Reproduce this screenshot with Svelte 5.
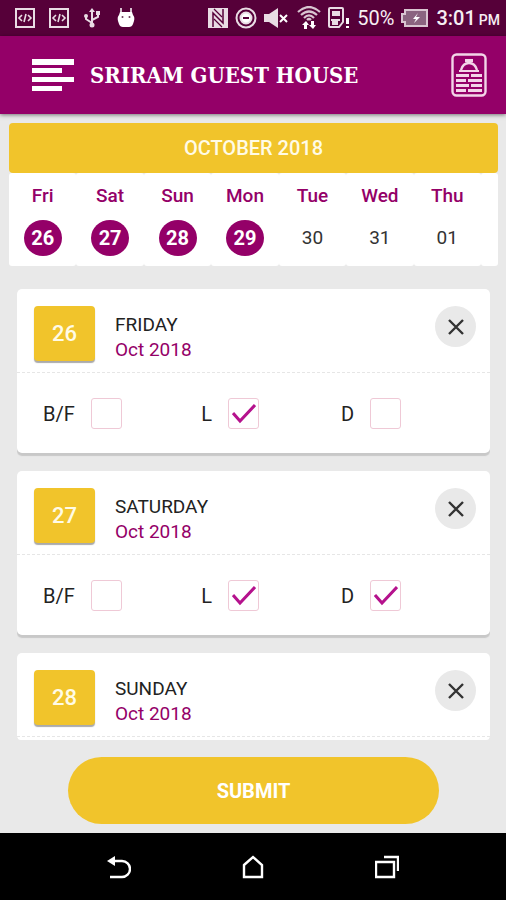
<script lang="ts">
	type Meal = { label: string; name: string; checked: boolean };
	type Booking = { date: string; day: string; month: string; meals: Meal[] };

	const meals = (b: boolean, l: boolean, d: boolean): Meal[] => [
		{ label: 'B/F', name: 'breakfast', checked: b },
		{ label: 'L', name: 'lunch', checked: l },
		{ label: 'D', name: 'dinner', checked: d }
	];

	let week = $state([
		{ day: 'Fri', date: '26', selected: true },
		{ day: 'Sat', date: '27', selected: true },
		{ day: 'Sun', date: '28', selected: true },
		{ day: 'Mon', date: '29', selected: true },
		{ day: 'Tue', date: '30', selected: false },
		{ day: 'Wed', date: '31', selected: false },
		{ day: 'Thu', date: '01', selected: false }
	]);

	let bookings = $state<Booking[]>([
		{ date: '26', day: 'FRIDAY', month: 'Oct 2018', meals: meals(false, true, false) },
		{ date: '27', day: 'SATURDAY', month: 'Oct 2018', meals: meals(false, true, true) },
		{ date: '28', day: 'SUNDAY', month: 'Oct 2018', meals: meals(false, true, true) }
	]);

	function remove(date: string) {
		bookings = bookings.filter((b) => b.date !== date);
		const day = week.find((d) => d.date === date);
		if (day) day.selected = false;
	}
</script>

{#snippet codeIcon()}
	<svg width="20" height="20" viewBox="0 0 20 20" fill="none" stroke="#e9dce4">
		<rect x="1" y="1" width="18" height="18" stroke-width="2" />
		<path d="M7 7 4 10l3 3M13 7l3 3-3 3M11 6l-2 8" stroke-width="1.6" />
	</svg>
{/snippet}

<div class="screen">
	<div class="status">
		<div class="status-group left">
			{@render codeIcon()}
			{@render codeIcon()}
			<svg width="20" height="20" viewBox="0 0 20 20" fill="none" stroke="#e9dce4" stroke-width="2">
				<path d="M9 3v14M9 15 3 11V7M9 12l6-3V5" />
				<path d="M9 0 6 4h6zM13 3h4v4h-4z" fill="#e9dce4" stroke="none" />
				<circle cx="9" cy="17" r="2.500" fill="#e9dce4" stroke="none" />
				<circle cx="3" cy="8" r="2" fill="#e9dce4" stroke="none" />
			</svg>
			<svg width="20" height="20" viewBox="0 0 20 20">
				<path d="M4 0v5M14 0v5" stroke="#fff" stroke-width="1.500" />
				<path d="M3 4h12l1 3q2 2 1 6l-1 3q-1 3-4 3H6q-3 0-4-3l-1-3q-1-4 1-6z" fill="#fff" />
				<circle cx="5.500" cy="9" r="1" fill="#6b3a57" />
				<circle cx="12.500" cy="9" r="1" fill="#6b3a57" />
			</svg>
		</div>
		<div class="status-group right">
			<svg width="20" height="20" viewBox="0 0 20 20">
				<path d="M0 0h20v20H0z" fill="#e9dce4" />
				<path d="M5 19V5l10 10V1" fill="none" stroke="#560039" stroke-width="1.500" />
				<path d="M6 1 14 9M6 11l8 8" fill="none" stroke="#560039" stroke-width="1.200" />
			</svg>
			<svg width="22" height="22" viewBox="0 0 22 22" fill="none" stroke="#e9dce4" stroke-width="2">
				<circle cx="11" cy="11" r="9.500" />
				<circle cx="11" cy="11" r="5.500" fill="#fff" />
				<path d="M8 11h6" stroke="#560039" />
			</svg>
			<svg width="26" height="20" viewBox="0 0 26 20">
				<path d="M0 6h5l9-6v20l-9-6H0z" fill="#e9dce4" />
				<path d="m16 7 7 7M23 7l-7 7" stroke="#fff" stroke-width="2" />
			</svg>
			<svg width="24" height="24" viewBox="0 0 24 24" fill="none" stroke="#d9c5d1" stroke-width="2.200">
				<path d="M1 6Q12-4 23 6M4 9q8-7 16 0M7 12q5-5 10 0M10 14q2-2 4 0" />
				<path d="m5 19 4-4 3 4h-2v4H7v-4zM12 19h2v-4h3v4h2l-3 4z" fill="#fff" stroke="none" />
			</svg>
			<svg width="22" height="22" viewBox="0 0 22 22">
				<path d="M1 2q0-1 1-1h12q1 0 1 1v13l-4 5H2q-1 0-1-1z" fill="none" stroke="#e9dce4" stroke-width="2" />
				<path d="M4 4h8v5H4zM3 12h9v2H3zM4 13h6v5H4z" fill="#e9dce4" />
				<path d="M18 11h3v6h-3zM18 19h3v2h-3z" fill="#fff" />
			</svg>
			<span class="percent">50%</span>
			<svg width="28" height="18" viewBox="0 0 28 18">
				<path d="M4 1h22v16H4v-4H1V5h3z" fill="#8b6480" stroke="#d9c5d1" stroke-width="2" />
				<path d="m17 4-5 6h3l-2 4 6-6h-4z" fill="#fff" />
			</svg>
			<span class="time">3:01 <small>PM</small></span>
		</div>
	</div>

	<header>
		<button class="icon-btn" aria-label="Menu">
			<svg width="42" height="32" viewBox="0 0 42 32" fill="#fff">
				<path d="M0 0h42v6H0zM0 9h30v5H0zM0 18h42v5H0zM0 27h30v5H0z" />
			</svg>
		</button>
		<h1>SRIRAM GUEST HOUSE</h1>
		<button class="icon-btn" aria-label="Food menu">
			<svg width="36" height="44" viewBox="0 0 36 44" fill="none" stroke="#f3d5e8" stroke-width="2">
				<rect x="1.500" y="1.500" width="33" height="41" rx="4" stroke-width="2.400" />
				<path d="M8 18h20" />
				<path d="M10 17q2-7 8-7t8 7" stroke-width="2.400" />
				<path d="M14 6h8v3h-2v2h-4V9h-2z" fill="#f3d5e8" stroke="none" />
				<path d="M5 22.500h13M20 22.500h11M5 27.500h10M17 27.500h14M5 32.500h13M20 32.500h11M5 37.500h10M17 37.500h14" stroke-width="2.800" />
			</svg>
		</button>
	</header>

	<section class="calendar">
		<h2>OCTOBER 2018</h2>
		<div class="week">
			{#each week as d}
				<button
					class="day"
					class:selected={d.selected}
					aria-pressed={d.selected}
					onclick={() => (d.selected = !d.selected)}
				>
					<span class="name">{d.day}</span>
					<span class="num">{d.date}</span>
				</button>
			{/each}
			<div class="filler"></div>
		</div>
	</section>

	<main>
		{#each bookings as b (b.date)}
			<article>
				<div class="card-top">
					<div class="badge">{b.date}</div>
					<div class="when">
						<h3>{b.day}</h3>
						<p>{b.month}</p>
					</div>
					<button class="close" aria-label="Remove {b.day}" onclick={() => remove(b.date)}>
						<svg width="16" height="16" viewBox="0 0 16 16" stroke="#333" stroke-width="2.400">
							<path d="m1 1 14 14M15 1 1 15" />
						</svg>
					</button>
				</div>
				<div class="meals">
					{#each b.meals as meal}
						<label>
							{meal.label}
							<span class="box">
								<input type="checkbox" name="{meal.name}-{b.date}" bind:checked={meal.checked} />
								{#if meal.checked}
									<svg width="24" height="20" viewBox="0 0 24 20" fill="none" stroke="#b5128d" stroke-width="3">
										<path d="m1 9 7 8L23 1" />
									</svg>
								{/if}
							</span>
						</label>
					{/each}
				</div>
			</article>
		{/each}
	</main>

	<button class="submit">SUBMIT</button>

	<nav>
		<button aria-label="Back">
			<svg width="24" height="24" viewBox="0 0 24 24" fill="none" stroke="#fff" stroke-width="2.400">
				<path d="M5 6h10a8 8 0 0 1 0 16H3" />
				<path d="M0 6 8 1v10z" fill="#fff" stroke="none" />
			</svg>
		</button>
		<button aria-label="Home">
			<svg width="24" height="24" viewBox="0 0 24 24" fill="none" stroke="#fff" stroke-width="2.400">
				<path d="M3 10 12 2l9 8v12H3z" />
			</svg>
		</button>
		<button aria-label="Recent apps">
			<svg width="24" height="24" viewBox="0 0 24 24" fill="none" stroke="#fff" stroke-width="2.400">
				<path d="M1 7h18v15H1zM9 2h14v14" />
			</svg>
		</button>
	</nav>
</div>

<style>
	:global(body) {
		margin: 0;
		background: #e9e9e9;
	}
	.screen {
		height: 100vh;
		display: flex;
		flex-direction: column;
		font-family: Roboto, "Liberation Sans", sans-serif;
		color: #222;
	}
	h1, h2, h3, p {
		margin: 0;
	}
	button {
		font-family: inherit;
		border: none;
		padding: 0;
		background: none;
		cursor: pointer;
	}
	svg {
		display: block;
		flex-shrink: 0;
	}
	.status {
		display: flex;
		justify-content: space-between;
		height: 36px;
		flex-shrink: 0;
		padding: 0 6px 0 15px;
		background: #560039;
		color: #f6eef3;
	}
	.status-group {
		display: flex;
		align-items: center;
	}
	.left {
		gap: 14px;
	}
	.right {
		gap: 7px;
	}
	.percent, .time {
		font-size: 20px;
		white-space: nowrap;
	}
	.time {
		font-weight: 500;
	}
	.time small {
		font-size: 14px;
		margin-left: -2px;
	}
	header {
		display: flex;
		align-items: center;
		height: 78px;
		flex-shrink: 0;
		padding: 0 19px 0 32px;
		background: #940068;
		box-shadow: 0 1px 4px rgba(0, 0, 0, 0.5);
	}
	h1 {
		flex: 1;
		margin-left: 16px;
		font-family: "DejaVu Serif Condensed", "DejaVu Serif", serif;
		font-size: 22px;
		font-weight: 700;
		line-height: 30px;
		color: #fff;
		white-space: nowrap;
	}
	.calendar {
		margin: 9px 8px 0 9px;
		flex-shrink: 0;
	}
	h2 {
		border-radius: 4px;
		background: #f1c42b;
		color: #fffbe6;
		font-size: 20px;
		font-weight: 500;
		line-height: 50px;
		text-align: center;
	}
	.week {
		display: grid;
		grid-template-columns: repeat(7, 1fr) 17px;
	}
	.day, .filler {
		background: #fff;
		border-radius: 3px;
	}
	.day {
		display: flex;
		flex-direction: column;
		align-items: center;
		gap: 13px;
		padding: 12px 0 10px;
		font-size: 19px;
		line-height: 22px;
	}
	.name {
		color: #940068;
		font-weight: 500;
	}
	.num {
		width: 38px;
		line-height: 36px;
		border-radius: 50%;
		color: #333;
	}
	.selected .num {
		background: #940068;
		color: #fff;
		font-size: 20px;
		font-weight: 700;
	}
	main {
		flex: 1;
		min-height: 0;
		margin: 23px 16px 0 17px;
		overflow-y: auto;
		scrollbar-width: none;
		border-radius: 4px;
	}
	article {
		margin-bottom: 18px;
		border-radius: 5px;
		background: #fff;
		box-shadow: 0 3px 1px #c8c8c8;
	}
	.card-top {
		display: flex;
		align-items: flex-start;
		padding: 17px 14px 10px 17px;
		border-bottom: 1px dashed #e6e6e6;
	}
	.badge {
		width: 61px;
		border-radius: 4px;
		background: #f1c42b;
		box-shadow: 0 2px 1px #aaa;
		color: #fffbe6;
		font-size: 22px;
		font-weight: 500;
		line-height: 55px;
		text-align: center;
	}
	.when {
		flex: 1;
		margin: 6px 0 0 20px;
		font-size: 19px;
		line-height: 25px;
	}
	h3 {
		font-size: 19px;
		font-weight: 400;
	}
	.when p {
		color: #940068;
	}
	.close {
		display: grid;
		place-items: center;
		width: 41px;
		height: 41px;
		border-radius: 50%;
		background: #e9e9e9;
	}
	.meals {
		display: grid;
		grid-template-columns: 17fr 15fr 16fr;
		padding: 25px 0 24px 26px;
	}
	.meals label {
		display: flex;
		align-items: center;
		gap: 16px;
		font-size: 20px;
	}
	.box {
		display: grid;
		place-items: center;
	}
	.box > * {
		grid-area: 1 / 1;
	}
	.box svg {
		pointer-events: none;
	}
	input {
		appearance: none;
		width: 31px;
		height: 31px;
		margin: 0;
		border: 1px solid #efc9d6;
		border-radius: 3px;
	}
	.submit {
		flex-shrink: 0;
		height: 67px;
		margin: 17px 67px 9px 68px;
		border-radius: 34px;
		background: #f1c42b;
		color: #fff;
		font-size: 20px;
		font-weight: 700;
	}
	nav {
		display: grid;
		grid-template-columns: repeat(3, 1fr);
		height: 67px;
		flex-shrink: 0;
		padding: 0 52px;
		background: #000;
	}
	nav button {
		display: grid;
		place-items: center;
	}
</style>
